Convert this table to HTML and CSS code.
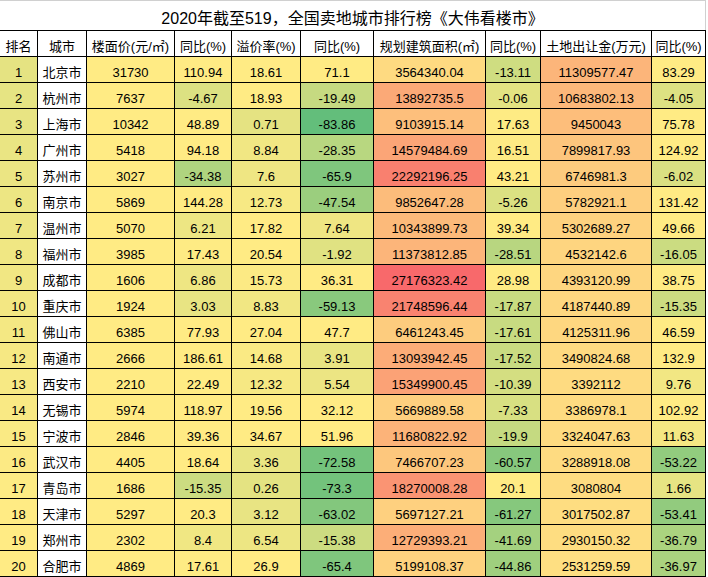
FILE: index.html
```html
<!DOCTYPE html>
<html lang="zh-CN">
<head>
<meta charset="utf-8">
<title>2020年截至519，全国卖地城市排行榜</title>
<link rel="stylesheet" href="styles.css">
</head>
<body>
<div class="sheet">
  <div class="title">2020年截至519，全国卖地城市排行榜《大伟看楼市》</div>
  <div class="grid">
    <div class="cell head">排名</div><div class="cell head">城市</div><div class="cell head">楼面价(元/㎡)</div><div class="cell head">同比(%)</div><div class="cell head">溢价率(%)</div><div class="cell head">同比(%)</div><div class="cell head">规划建筑面积(㎡)</div><div class="cell head">同比(%)</div><div class="cell head">土地出让金(万元)</div><div class="cell head">同比(%)</div>

    <div class="cell s">1</div><div class="cell city">北京市</div><div class="cell s">31730</div><div class="cell s">110.94</div><div class="cell s">18.61</div><div class="cell s">71.1</div><div class="cell s">3564340.04</div><div class="cell s">-13.11</div><div class="cell s">11309577.47</div><div class="cell s">83.29</div>
    <div class="cell s">2</div><div class="cell city">杭州市</div><div class="cell s">7637</div><div class="cell s">-4.67</div><div class="cell s">18.93</div><div class="cell s">-19.49</div><div class="cell s">13892735.5</div><div class="cell s">-0.06</div><div class="cell s">10683802.13</div><div class="cell s">-4.05</div>
    <div class="cell s">3</div><div class="cell city">上海市</div><div class="cell s">10342</div><div class="cell s">48.89</div><div class="cell s">0.71</div><div class="cell s">-83.86</div><div class="cell s">9103915.14</div><div class="cell s">17.63</div><div class="cell s">9450043</div><div class="cell s">75.78</div>
    <div class="cell s">4</div><div class="cell city">广州市</div><div class="cell s">5418</div><div class="cell s">94.18</div><div class="cell s">8.84</div><div class="cell s">-28.35</div><div class="cell s">14579484.69</div><div class="cell s">16.51</div><div class="cell s">7899817.93</div><div class="cell s">124.92</div>
    <div class="cell s">5</div><div class="cell city">苏州市</div><div class="cell s">3027</div><div class="cell s">-34.38</div><div class="cell s">7.6</div><div class="cell s">-65.9</div><div class="cell s">22292196.25</div><div class="cell s">43.21</div><div class="cell s">6746981.3</div><div class="cell s">-6.02</div>
    <div class="cell s">6</div><div class="cell city">南京市</div><div class="cell s">5869</div><div class="cell s">144.28</div><div class="cell s">12.73</div><div class="cell s">-47.54</div><div class="cell s">9852647.28</div><div class="cell s">-5.26</div><div class="cell s">5782921.1</div><div class="cell s">131.42</div>
    <div class="cell s">7</div><div class="cell city">温州市</div><div class="cell s">5070</div><div class="cell s">6.21</div><div class="cell s">17.82</div><div class="cell s">7.64</div><div class="cell s">10343899.73</div><div class="cell s">39.34</div><div class="cell s">5302689.27</div><div class="cell s">49.66</div>
    <div class="cell s">8</div><div class="cell city">福州市</div><div class="cell s">3985</div><div class="cell s">17.43</div><div class="cell s">20.54</div><div class="cell s">-1.92</div><div class="cell s">11373812.85</div><div class="cell s">-28.51</div><div class="cell s">4532142.6</div><div class="cell s">-16.05</div>
    <div class="cell s">9</div><div class="cell city">成都市</div><div class="cell s">1606</div><div class="cell s">6.86</div><div class="cell s">15.73</div><div class="cell s">36.31</div><div class="cell s">27176323.42</div><div class="cell s">28.98</div><div class="cell s">4393120.99</div><div class="cell s">38.75</div>
    <div class="cell s">10</div><div class="cell city">重庆市</div><div class="cell s">1924</div><div class="cell s">3.03</div><div class="cell s">8.83</div><div class="cell s">-59.13</div><div class="cell s">21748596.44</div><div class="cell s">-17.87</div><div class="cell s">4187440.89</div><div class="cell s">-15.35</div>
    <div class="cell s">11</div><div class="cell city">佛山市</div><div class="cell s">6385</div><div class="cell s">77.93</div><div class="cell s">27.04</div><div class="cell s">47.7</div><div class="cell s">6461243.45</div><div class="cell s">-17.61</div><div class="cell s">4125311.96</div><div class="cell s">46.59</div>
    <div class="cell s">12</div><div class="cell city">南通市</div><div class="cell s">2666</div><div class="cell s">186.61</div><div class="cell s">14.68</div><div class="cell s">3.91</div><div class="cell s">13093942.45</div><div class="cell s">-17.52</div><div class="cell s">3490824.68</div><div class="cell s">132.9</div>
    <div class="cell s">13</div><div class="cell city">西安市</div><div class="cell s">2210</div><div class="cell s">22.49</div><div class="cell s">12.32</div><div class="cell s">5.54</div><div class="cell s">15349900.45</div><div class="cell s">-10.39</div><div class="cell s">3392112</div><div class="cell s">9.76</div>
    <div class="cell s">14</div><div class="cell city">无锡市</div><div class="cell s">5974</div><div class="cell s">118.97</div><div class="cell s">19.56</div><div class="cell s">32.12</div><div class="cell s">5669889.58</div><div class="cell s">-7.33</div><div class="cell s">3386978.1</div><div class="cell s">102.92</div>
    <div class="cell s">15</div><div class="cell city">宁波市</div><div class="cell s">2846</div><div class="cell s">39.36</div><div class="cell s">34.67</div><div class="cell s">51.96</div><div class="cell s">11680822.92</div><div class="cell s">-19.9</div><div class="cell s">3324047.63</div><div class="cell s">11.63</div>
    <div class="cell s">16</div><div class="cell city">武汉市</div><div class="cell s">4405</div><div class="cell s">18.64</div><div class="cell s">3.36</div><div class="cell s">-72.58</div><div class="cell s">7466707.23</div><div class="cell s">-60.57</div><div class="cell s">3288918.08</div><div class="cell s">-53.22</div>
    <div class="cell s">17</div><div class="cell city">青岛市</div><div class="cell s">1686</div><div class="cell s">-15.35</div><div class="cell s">0.26</div><div class="cell s">-73.3</div><div class="cell s">18270008.28</div><div class="cell s">20.1</div><div class="cell s">3080804</div><div class="cell s">1.66</div>
    <div class="cell s">18</div><div class="cell city">天津市</div><div class="cell s">5297</div><div class="cell s">20.3</div><div class="cell s">3.12</div><div class="cell s">-63.02</div><div class="cell s">5697127.21</div><div class="cell s">-61.27</div><div class="cell s">3017502.87</div><div class="cell s">-53.41</div>
    <div class="cell s">19</div><div class="cell city">郑州市</div><div class="cell s">2302</div><div class="cell s">8.4</div><div class="cell s">6.54</div><div class="cell s">-15.38</div><div class="cell s">12729393.21</div><div class="cell s">-41.69</div><div class="cell s">2930150.32</div><div class="cell s">-36.79</div>
    <div class="cell s">20</div><div class="cell city">合肥市</div><div class="cell s">4869</div><div class="cell s">17.61</div><div class="cell s">26.9</div><div class="cell s">-65.4</div><div class="cell s">5199108.37</div><div class="cell s">-44.86</div><div class="cell s">2531259.59</div><div class="cell s">-36.97</div>
  </div>
</div>
<script src="script.js"></script>
</body>
</html>
```

FILE: styles.css
```css
* { box-sizing: border-box; }
html, body { margin: 0; padding: 0; background: #ffffff; }
body {
  font-family: "Liberation Sans", "Noto Sans CJK SC", sans-serif;
  color: #000000;
}
.sheet { width: 706px; }
.title {
  height: 30px;
  border-top: 1px solid #d0d0d0;
  border-right: 1px solid #d0d0d0;
  display: flex;
  align-items: flex-end;
  justify-content: center;
  font-size: 16px;
  line-height: 18px;
  padding-bottom: 2px;
}
.grid {
  display: grid;
  grid-template-columns: 37px 48px 87px 56px 68px 72px 111px 54px 110px 53px;
  grid-auto-rows: 25px;
  gap: 1px;
  background: #000000;
  padding: 1px 1px 1px 0;
}
.cell {
  background: #ffffff;
  display: flex;
  align-items: flex-end;
  justify-content: center;
  font-size: 13px;
  line-height: 16px;
  padding-bottom: 1px;
  white-space: nowrap;
  overflow: hidden;
}
.head { background: #ffffff; }
.city { background: #ffffff; }
```

FILE: script.js
```js
(function () {
  var cells = Array.prototype.slice.call(document.querySelectorAll('.cell.s'));
  var vals = cells.map(function (c) { return parseFloat(c.textContent); });
  var min = Math.min.apply(null, vals), max = Math.max.apply(null, vals);
  var mid = 18;
  var cMin = [99, 190, 123], cMid = [255, 235, 132], cMax = [248, 105, 107];
  function mix(a, b, t) {
    return 'rgb(' + [0, 1, 2].map(function (i) { return Math.round(a[i] + (b[i] - a[i]) * t); }).join(',') + ')';
  }
  cells.forEach(function (c, i) {
    var v = vals[i];
    var col = v <= mid ? mix(cMin, cMid, (v - min) / (mid - min)) : mix(cMid, cMax, (v - mid) / (max - mid));
    c.style.backgroundColor = col;
  });
})();
```
